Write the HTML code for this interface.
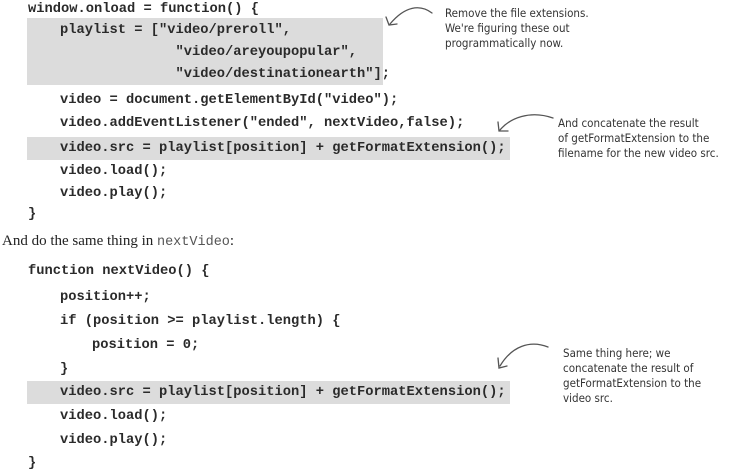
<!DOCTYPE html>
<html><head><meta charset="utf-8"><style>
html,body{margin:0;padding:0;background:#fff;width:750px;height:469px;overflow:hidden;position:relative}
.c{position:absolute;font-family:"Liberation Mono",monospace;font-weight:bold;font-size:13.75px;color:#2a2a2a;white-space:pre;line-height:16px}
.g{position:absolute;background:#dcdcdc}
.h{position:absolute;font-family:"DejaVu Sans Condensed","DejaVu Sans",sans-serif;font-size:11.5px;color:#333;line-height:15px;white-space:pre;font-weight:300}
.t{position:absolute;font-family:"Liberation Serif",serif;font-size:15px;color:#222;white-space:pre}
</style></head><body>
<div class="g" style="left:27px;top:18px;width:356px;height:67px"></div>
<div class="g" style="left:27px;top:137px;width:483px;height:23px"></div>
<div class="g" style="left:27px;top:381px;width:483px;height:23px"></div>

<div class="c" style="left:28px;top:2px">window.onload = function() {</div>
<div class="c" style="left:60px;top:23px">playlist = ["video/preroll",</div>
<div class="c" style="left:60px;top:45px">              "video/areyoupopular",</div>
<div class="c" style="left:60px;top:67px">              "video/destinationearth"];</div>
<div class="c" style="left:60px;top:93px">video = document.getElementById("video");</div>
<div class="c" style="left:60px;top:116px">video.addEventListener("ended", nextVideo,false);</div>
<div class="c" style="left:60px;top:141px">video.src = playlist[position] + getFormatExtension();</div>
<div class="c" style="left:60px;top:164px">video.load();</div>
<div class="c" style="left:60px;top:186px">video.play();</div>
<div class="c" style="left:28px;top:207px">}</div>

<div class="t" style="left:2px;top:233px">And do the same thing in <span style="font-family:'Liberation Mono',monospace;font-size:13.5px;color:#555">nextVideo</span>:</div>

<div class="c" style="left:28px;top:264px">function nextVideo() {</div>
<div class="c" style="left:60px;top:290px">position++;</div>
<div class="c" style="left:60px;top:314px">if (position &gt;= playlist.length) {</div>
<div class="c" style="left:92px;top:338px">position = 0;</div>
<div class="c" style="left:60px;top:362px">}</div>
<div class="c" style="left:60px;top:385px">video.src = playlist[position] + getFormatExtension();</div>
<div class="c" style="left:60px;top:409px">video.load();</div>
<div class="c" style="left:60px;top:433px">video.play();</div>
<div class="c" style="left:28px;top:456px">}</div>

<div class="h" style="left:445px;top:6px">Remove the file extensions.
We're figuring these out
programmatically now.</div>
<div class="h" style="left:558px;top:116px">And concatenate the result
of getFormatExtension to the
filename for the new video src.</div>
<div class="h" style="left:563px;top:346px">Same thing here; we
concatenate the result of
getFormatExtension to the
video src.</div>

<svg width="750" height="469" style="position:absolute;left:0;top:0" fill="none" stroke="#555" stroke-width="1.3" stroke-linecap="round">
<path d="M432 13 C420 4 405 6 390 24"/><path d="M386 17 L389 25 L397 24"/>
<path d="M553 118 C530 110 510 118 500 130"/><path d="M498 122 L499 131 L508 131"/>
<path d="M548 347 C530 340 512 346 500 366"/><path d="M498 358 L499 368 L507 366"/>
</svg>
</body></html>
